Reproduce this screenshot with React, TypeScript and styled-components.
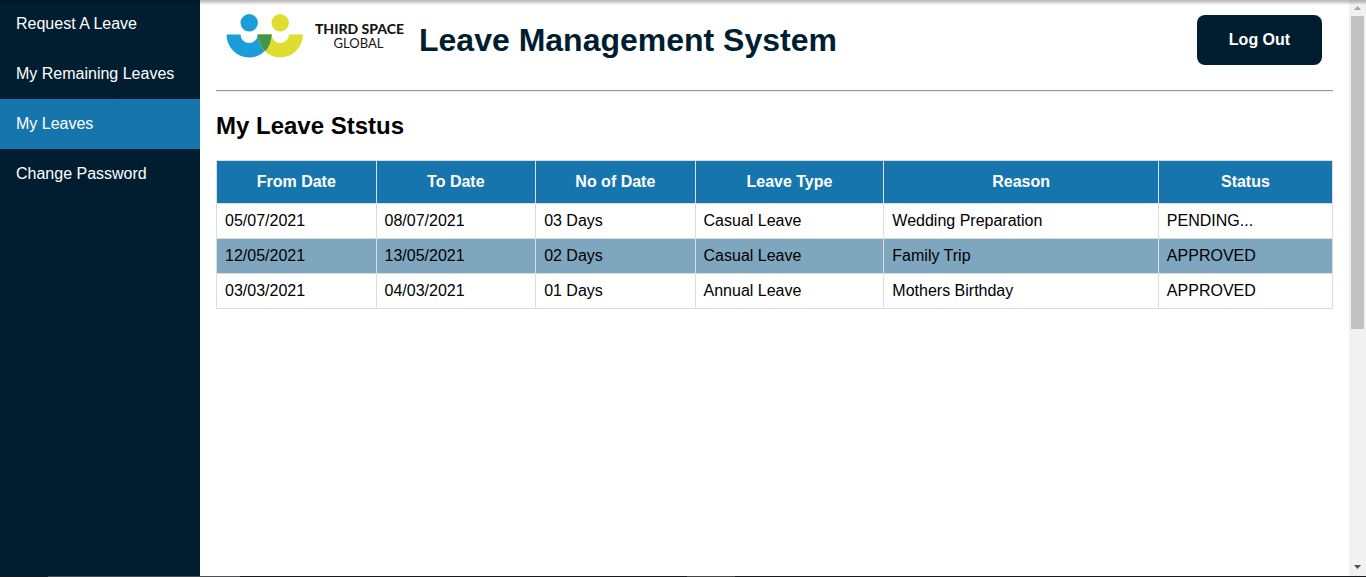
import React from 'react';
import styled, { createGlobalStyle } from 'styled-components';

const navy = '#001e2f';
const blue = '#1775ae';

const GlobalStyle = createGlobalStyle`
  *, *::before, *::after { box-sizing: border-box; }
  html, body { margin: 0; padding: 0; height: 100%; }
  body {
    font-family: "Liberation Sans", Arial, sans-serif;
    font-size: 16px;
    line-height: 18px;
    color: #000;
    background: #fff;
  }
`;

const Page = styled.div`
  display: grid;
  grid-template-columns: 200px minmax(0, 1fr) 17px;
  grid-template-rows: 1fr 1px;
  min-height: 100vh;
`;

const TopShade = styled.div`
  position: absolute;
  top: 0;
  left: 0;
  right: 0;
  height: 5px;
  background: linear-gradient(rgba(0, 0, 0, 0.28), rgba(0, 0, 0, 0.16) 50%, rgba(0, 0, 0, 0));
  pointer-events: none;
`;

const Sidebar = styled.nav`
  background: ${navy};
`;

const NavLink = styled.a<{ $active?: boolean }>`
  display: block;
  padding: 16px;
  color: #fff;
  text-decoration: none;
  background: ${({ $active }) => ($active ? blue : 'transparent')};

  &:first-child {
    padding-top: 15px;
  }
`;

const Main = styled.main`
  padding: 8px 16px;
`;

const Header = styled.header`
  display: flex;
  align-items: center;
  height: 64px;
  padding-right: 11px;
`;

const LogoLink = styled.a`
  display: block;
  width: 203px;
  height: 56px;

  svg { display: block; }
`;

const Title = styled.h1`
  flex: 1;
  margin: 0;
  font-size: 32px;
  line-height: 36px;
  color: ${navy};
`;

const LogOutButton = styled.button`
  width: 125px;
  height: 50px;
  border: 0;
  border-radius: 8px;
  background: ${navy};
  color: #fff;
  font: bold 16px "Liberation Sans", Arial, sans-serif;
  cursor: pointer;
`;

const Divider = styled.hr`
  height: 2px;
  margin: 18px 0 19px;
  border: 0;
  border-top: 1px solid #989898;
  border-bottom: 1px solid #eee;
`;

const SectionTitle = styled.h2`
  margin: 0 0 20px;
  font-size: 24px;
  line-height: 29px;
`;

const Table = styled.table`
  width: 100%;
  border-collapse: collapse;
`;

const HeadCell = styled.th`
  padding: 12px 8px;
  border: 1px solid #ddd;
  background: ${blue};
  color: #fff;
`;

const Row = styled.tr<{ $highlighted?: boolean }>`
  background: ${({ $highlighted }) => ($highlighted ? '#7fa6bf' : '#fff')};
`;

const Cell = styled.td`
  padding: 8px;
  border: 1px solid #ddd;
`;

const ScrollTrack = styled.div`
  display: flex;
  flex-direction: column;
  align-items: center;
  justify-content: space-between;
  background: #f1f1f1;

  svg { display: block; }
`;

const ScrollThumb = styled.div`
  width: 13px;
  height: 56%;
  background: #c1c1c1;
`;

const ScrollTop = styled.div`
  display: flex;
  flex: 1;
  flex-direction: column;
  align-items: center;
`;

const BottomEdge = styled.div`
  grid-column: 1 / -1;
  background: linear-gradient(
    to right,
    #14191b 48px, #4b5052 48px, #4b5052 240px,
    #17191c 240px, #17191c 687px, #444 687px, #444 735px, #17191c 735px
  );
`;

const Logo = () => (
  <svg width="203" height="56" viewBox="216 12 203 56" role="img" aria-label="Third Space Global">
    <circle cx="249.200" cy="22.800" r="8.700" fill="#1b9ddb" />
    <circle cx="280.200" cy="22.800" r="8.700" fill="#dfdd30" />
    <path d="M226.500 34.500H240.500A8.600 8.600 0 0 0 257.700 34.500H271.700A22.600 23 0 0 1 226.500 34.500Z" fill="#1b9ddb" />
    <path d="M257.700 34.500H271.700A8.600 8.600 0 0 0 288.900 34.500H302.900A22.600 23 0 0 1 257.700 34.500Z" fill="#dfdd30" />
    <path d="M257.700 34.500H271.700Q271.200 44.500 265.300 51.200Q258.200 44.500 257.700 34.500Z" fill="#43954b" />
    <g fill="#161616" textAnchor="middle" fontFamily="Lato, sans-serif">
      <text x="359.500" y="34" fontSize="14" fontWeight="900">THIRD SPACE</text>
      <text x="358.500" y="48" fontSize="13">GLOBAL</text>
    </g>
  </svg>
);

const links = ['Request A Leave', 'My Remaining Leaves', 'My Leaves', 'Change Password'];
const columns = ['From Date', 'To Date', 'No of Date', 'Leave Type', 'Reason', 'Status'];
const leaves = [
  ['05/07/2021', '08/07/2021', '03 Days', 'Casual Leave', 'Wedding Preparation', 'PENDING...'],
  ['12/05/2021', '13/05/2021', '02 Days', 'Casual Leave', 'Family Trip', 'APPROVED'],
  ['03/03/2021', '04/03/2021', '01 Days', 'Annual Leave', 'Mothers Birthday', 'APPROVED'],
];

export default function App() {
  return (
    <>
      <GlobalStyle />
      <Page>
        <Sidebar aria-label="Main">
          {links.map((label) => (
            <NavLink key={label} href="#" $active={label === 'My Leaves'}>
              {label}
            </NavLink>
          ))}
        </Sidebar>
        <Main>
          <Header>
            <LogoLink href="#">
              <Logo />
            </LogoLink>
            <Title>Leave Management System</Title>
            <LogOutButton type="button">Log Out</LogOutButton>
          </Header>
          <Divider />
          <SectionTitle>My Leave Ststus</SectionTitle>
          <Table>
            <thead>
              <tr>
                {columns.map((name) => (
                  <HeadCell key={name} scope="col">{name}</HeadCell>
                ))}
              </tr>
            </thead>
            <tbody>
              {leaves.map((leave, index) => (
                <Row key={leave[0]} $highlighted={index === 1}>
                  {leave.map((value, i) => (
                    <Cell key={columns[i]}>{value}</Cell>
                  ))}
                </Row>
              ))}
            </tbody>
          </Table>
        </Main>
        <ScrollTrack aria-hidden="true">
          <ScrollTop>
            <svg width="17" height="16" viewBox="0 0 17 16">
              <path d="M5 10L8.500 6L12 10Z" fill="#a3a3a3" />
            </svg>
            <ScrollThumb />
          </ScrollTop>
          <svg width="17" height="17" viewBox="0 0 17 17">
            <path d="M5 6L8.500 10L12 6Z" fill="#505050" />
          </svg>
        </ScrollTrack>
        <BottomEdge />
      </Page>
      <TopShade />
    </>
  );
}
